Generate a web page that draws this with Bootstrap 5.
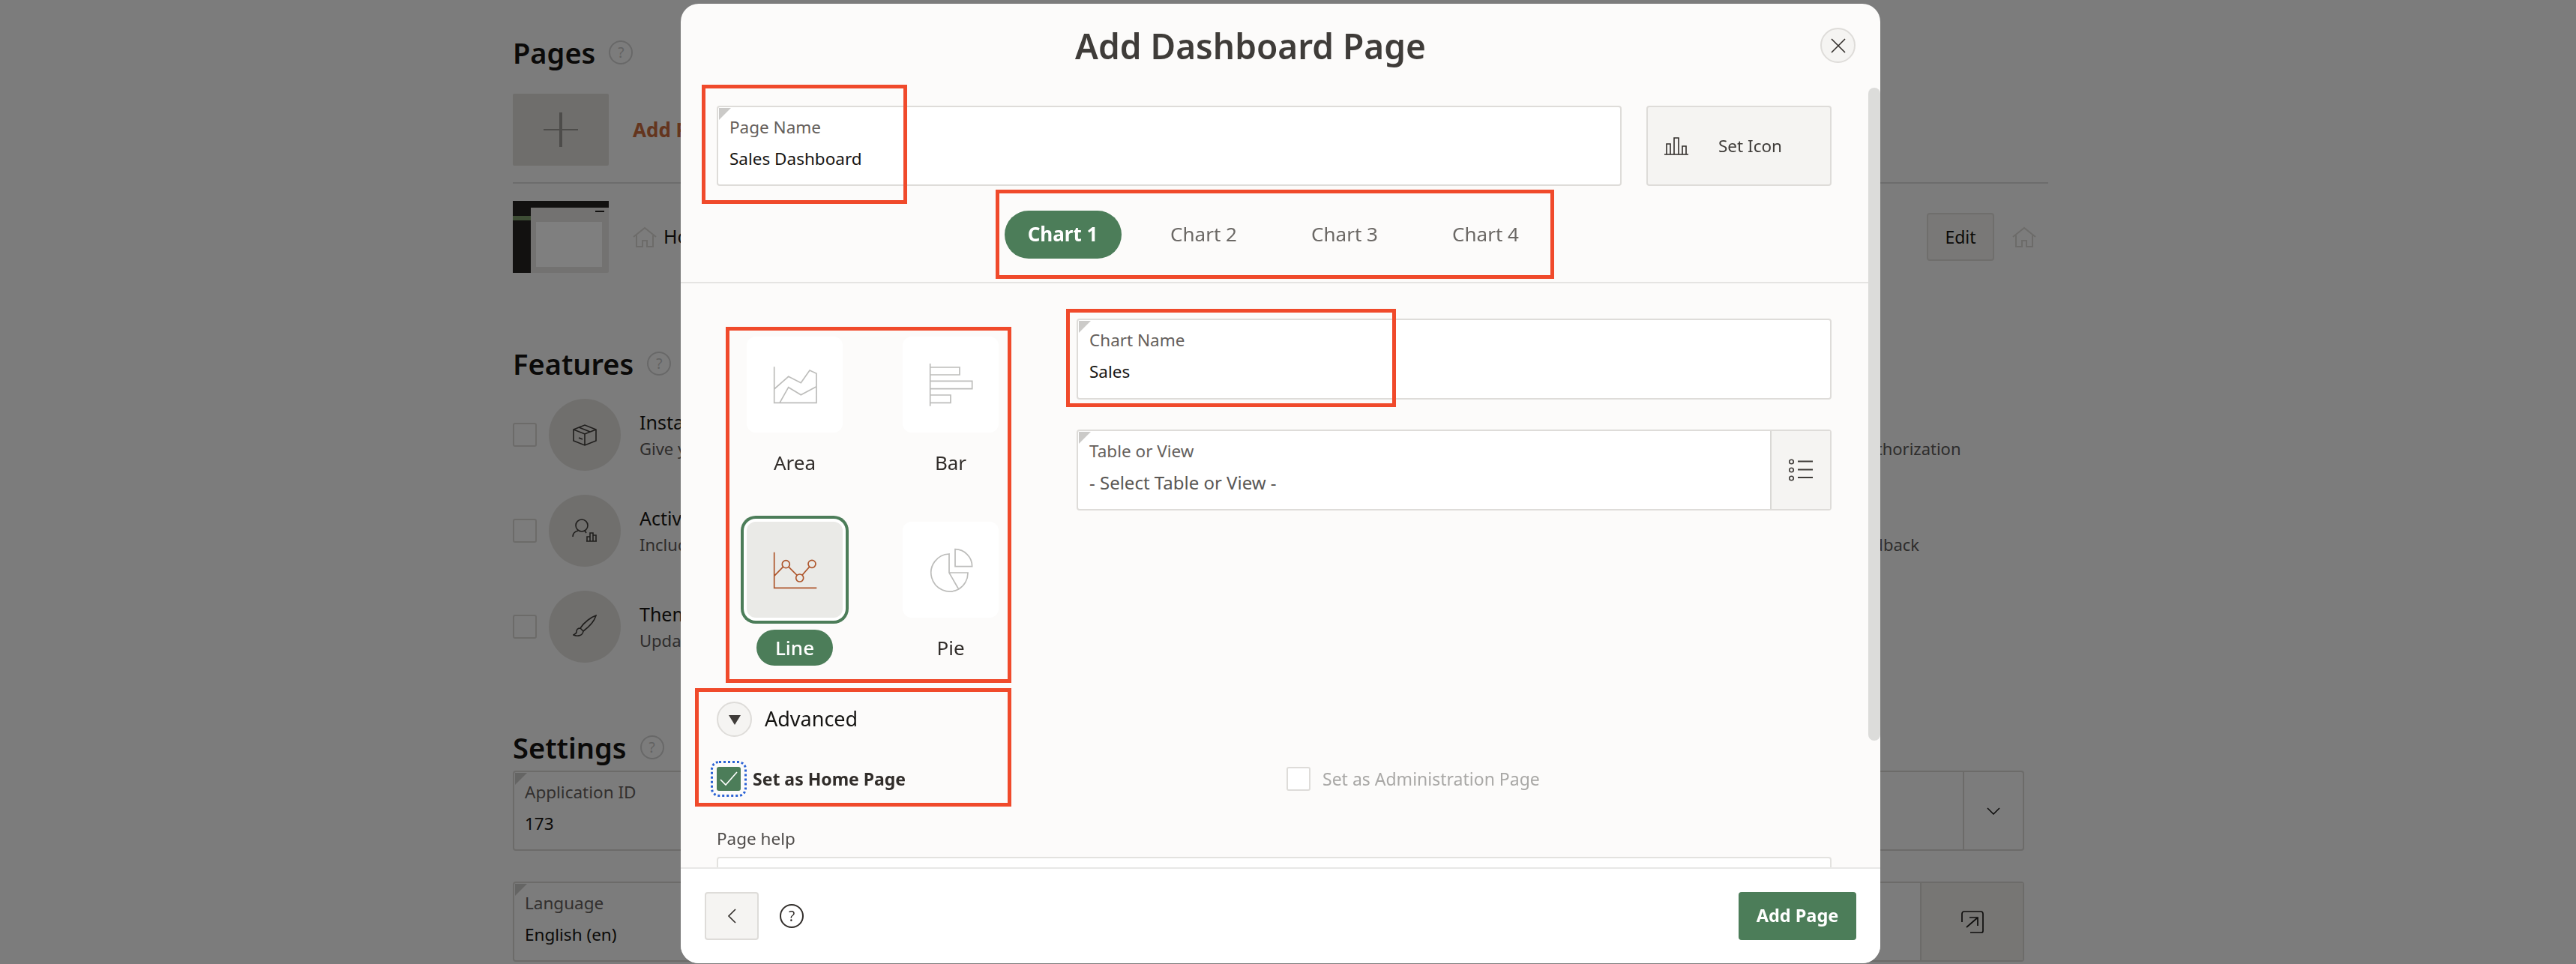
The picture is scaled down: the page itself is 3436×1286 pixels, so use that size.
<!DOCTYPE html>
<html lang="en">

<head>
  <meta charset="UTF-8">
  <meta name="viewport" content="width=device-width, initial-scale=1.0">
  <title>Add Dashboard Page</title>
  <link href="https://cdn.jsdelivr.net/npm/bootstrap@5.3.3/dist/css/bootstrap.min.css" rel="stylesheet">
  <style>
    html, body { height: 100%; overflow: hidden; }
    body { background: #f8f8f8; font-family: "Noto Sans", sans-serif; color: #161513; font-size: 23px; }

    /* page behind the dialog */
    .app-page { margin-left: 684px; width: 2048px; padding-top: 46px; }
    .sec-title { font-size: 38px; font-weight: 600; line-height: 48px; margin: 0; color: #161513; display: flex; align-items: center; gap: 18px; }
    .sec-help { width: 32px; height: 32px; border: 2px solid #d0d0d0; border-radius: 50%; color: #c4c4c4; font-size: 19px; font-weight: 400; line-height: 28px; text-align: center; }
    .page-row { display: flex; align-items: center; width: 2016px; height: 96px; }
    .add-row { margin-top: 31px; }
    .add-tile { width: 128px; height: 96px; background: #dedcd9; display: flex; align-items: center; justify-content: center; border-radius: 2px; }
    .add-link { color: #c86a3c; font-weight: 700; font-size: 26px; margin-left: 32px; }
    .page-rule { border-top: 2px solid #d8d8d8; margin: 22px 0 23px; }
    .home-name { margin-left: 32px; display: flex; align-items: center; gap: 9px; font-size: 25px; }
    .edit-btn { width: 90px; height: 64px; margin-left: auto; margin-right: 24px; background: #f2f0ee; border: 2px solid #dedcd9; border-radius: 4px; font-size: 23px; color: #161513; padding: 0; }
    .home-end { margin-right: -16px; }
    .features-title { margin-top: 97px; }
    .ftr-grid { display: grid; grid-template-columns: 1008px 1008px; row-gap: 32px; width: 2016px; margin-top: 23px; }
    .ftr-item { display: flex; align-items: center; height: 96px; white-space: nowrap; }
    .ftr-box { width: 32px; height: 32px; border: 2px solid #d8d6d3; border-radius: 3px; background: #f8f8f8; flex: none; }
    .ftr-circle { width: 96px; height: 96px; border-radius: 50%; background: #e0dedb; margin-left: 16px; margin-right: 25px; display: flex; align-items: center; justify-content: center; flex: none; }
    .ftr-name { font-size: 25px; line-height: 32px; }
    .ftr-sub { font-size: 22px; line-height: 30px; color: #5c5a58; margin-top: 4px; }
    .ftr-push { margin-left: 394px; }
    .ftr-push2 { margin-left: 548px; }
    .set-title { margin-top: 89px; margin-bottom: 7px; }
    .set-grid { display: grid; grid-template-columns: 984px 1000px; column-gap: 32px; row-gap: 41px; width: 2016px; }

    /* input fields */
    .fld { position: relative; height: 107px; border: 2px solid #dedcd9; border-radius: 4px; background: #fff; padding: 11px 15px 0; display: flex; }
    .fld-bare { background: transparent; border-color: #d8d6d3; padding: 0; }
    .fld::before { content: ""; position: absolute; left: 1px; top: 1px; border-top: 16px solid #cbcac8; border-right: 16px solid transparent; }
    .fld-main { flex: 1; min-width: 0; }
    .fld-bare .fld-main { padding: 11px 14px 0; }
    .fld-label { font-size: 22.5px; line-height: 32px; color: #655f5c; }
    .fld-value { font-size: 22.5px; line-height: 32px; margin-top: 10px; color: #161513; }
    .fld-value.dim-value { font-size: 24px; color: #5a5754; }
    .fld-side { display: flex; align-items: center; justify-content: center; border-left: 2px solid #d8d6d3; width: 80px; }
    .fld-side-wide { width: 137px; background: #eeece9; }

    /* dialog */
    .modal.dlg-wrap { overflow: hidden; }
    .dlg { max-width: none; width: 1600px; margin: 5px 0 0 908px; }
    .dlg .modal-content { height: 1280px; background: #fcfbfa; border: 0; border-radius: 24px; overflow: hidden; color: #161513; }
    .dlg-head { height: 112px; padding: 0; border: 0; display: block; flex: none; }
    .dlg-title { font-size: 46px; font-weight: 600; color: #3f3c39; line-height: 112px; text-align: center; margin: 0; padding-right: 80px; }
    .dlg-close { position: absolute; left: 1520px; top: 32px; width: 47px; height: 47px; border-radius: 50%; border: 2px solid #dedcd9; background: #f5f4f2; padding: 0; display: flex; align-items: center; justify-content: center; }
    .dlg-body { flex: none; height: 1040px; overflow: hidden; padding: 24px 65px 0 48px; position: relative; }
    .dlg-thumb { position: absolute; right: 0; top: 0; width: 16px; height: 871px; background: #dcdcda; border-radius: 8px; }
    .top-line { display: flex; gap: 33px; }
    .top-line .fld { flex: 1; }
    .icon-btn { width: 247px; height: 107px; background: #f5f4f2; border: 2px solid #dedcd9; border-radius: 4px; color: #3f3c39; font-size: 22.5px; display: flex; align-items: center; padding: 0 0 0 22px; gap: 40px; }
    .tab-bar { margin-top: 33px; gap: 32px; height: 64px; }
    .tab-bar .nav-link { width: 156px; height: 64px; padding: 0; font-size: 26px; line-height: 62px; text-align: center; color: #6b6865; border-radius: 32px; }
    .tab-bar .nav-link.active { background: #4c7d59; color: #fff; font-weight: 700; }
    .tab-rule { height: 2px; background: #e5e4e2; margin: 31px -65px 0 -48px; }
    .chart-area { display: flex; gap: 64px; }
    .type-grid { display: grid; grid-template-columns: 208px 208px; row-gap: 55px; padding-top: 71px; flex: none; }
    .type-item { display: flex; flex-direction: column; align-items: center; }
    .type-tile { width: 128px; height: 128px; background: #fff; border-radius: 12px; display: flex; align-items: center; justify-content: center; }
    .type-tile.picked { background: #eaeae7; box-shadow: 0 0 0 4px #fff, 0 0 0 8px #4c7d59; }
    .type-name { margin-top: 16px; height: 48px; line-height: 48px; font-size: 26px; color: #312d2a; padding: 0 16px; border-radius: 24px; }
    .type-name.picked { width: 102px; text-align: center; padding: 0; background: #4c7d59; color: #fff; font-weight: 500; }
    .chart-fields { flex: 1; display: flex; flex-direction: column; gap: 40px; padding-top: 47px; }
    .chart-fields .fld { height: 108px; }
    .fld-split { padding-right: 0; padding-top: 0; padding-left: 0; background: #fff; }
    .fld-split .fld-main { padding: 11px 15px 0; }
    .fld-split .fld-side { background: #f5f4f2; border-left-color: #d9d8d5; }
    .adv-line { display: flex; align-items: center; gap: 17px; margin-top: 48px; height: 47px; font-size: 27px; }
    .adv-btn { width: 47px; height: 47px; border-radius: 50%; border: 2px solid #dedcd9; background: #f5f4f2; padding: 0; display: flex; align-items: center; justify-content: center; }
    .chk-line { display: flex; align-items: center; margin-top: 40px; height: 32px; }
    .chk-left { width: 760px; display: flex; align-items: center; gap: 16px; font-weight: 700; color: #312d2a; font-size: 23px; }
    .chk-right { display: flex; align-items: center; gap: 16px; color: #a9a8a6; font-size: 23px; }
    .chk-on { width: 32px; height: 32px; background: #4c7d59; border-radius: 3px; outline: 3px dotted #2a62d4; outline-offset: 5px; display: flex; flex: none; }
    .chk-off { width: 32px; height: 32px; background: #fff; border: 2px solid #dedcd9; border-radius: 3px; flex: none; }
    .help-label { margin-top: 48px; line-height: 32px; font-size: 22.5px; color: #4f4c4a; }
    .help-area { height: 60px; border: 2px solid #e3e2df; border-radius: 4px; background: #fff; margin-top: 8px; }
    .dlg-foot { height: 128px; flex: none; background: #fff; border-top: 2px solid #e8e8e6; padding: 0 32px; display: flex; align-items: center; justify-content: flex-start; flex-wrap: nowrap; margin: 0; }
    .dlg-foot > * { margin: 0; }
    .back-btn { width: 72px; height: 64px; background: #f5f4f2; border: 2px solid #dedcd9; border-radius: 4px; padding: 0; display: flex; align-items: center; justify-content: center; }
    .foot-help { width: 32px; height: 48px; margin-left: 28px !important; display: flex; align-items: center; justify-content: center; }
    .foot-ring { width: 32px; height: 32px; flex: none; border: 2px solid #312d2a; border-radius: 50%; font-size: 19px; line-height: 28px; text-align: center; color: #312d2a; }
    .add-btn { margin-left: auto !important; width: 157px; height: 64px; background: #4c7d59; border: 0; border-radius: 4px; color: #fff; font-weight: 700; font-size: 23.5px; padding: 0; }

    /* red call-outs drawn over the dialog */
    .callout { position: absolute; border: 5px solid #f04a2b; pointer-events: none; z-index: 5; }
    .call-name { left: 28px; top: 108px; width: 274px; height: 159px; }
    .call-tabs { left: 420px; top: 248px; width: 745px; height: 119px; }
    .call-chart { left: 514px; top: 407px; width: 440px; height: 131px; }
    .call-types { left: 60px; top: 431px; width: 381px; height: 475px; }
    .call-adv { left: 19px; top: 913px; width: 422px; height: 158px; }
  </style>
</head>

<body>
  <div class="app-page">
    <h2 class="sec-title"><span>Pages</span><span class="sec-help">?</span></h2>
    <div class="page-row add-row">
      <div class="add-tile">
        <svg width="48" height="48" viewBox="0 0 48 48"><path d="M24 1v46" stroke="#9a9894" stroke-width="4" fill="none"/><path d="M1 24h46" stroke="#9a9894" stroke-width="2" fill="none"/></svg>
      </div>
      <span class="add-link">Add Page</span>
    </div>
    <div class="page-rule"></div>
    <div class="page-row">
      <svg width="128" height="96" viewBox="0 0 128 96">
        <rect width="128" height="96" rx="2" fill="#e6e5e2"/>
        <rect x="31" y="28" width="88" height="60" fill="#fff"/>
        <rect width="128" height="9" fill="#242220"/>
        <rect y="9" width="24" height="87" fill="#242220"/>
        <rect y="20" width="24" height="6" fill="#7d9a6a"/>
        <rect x="110" y="13" width="12" height="2" fill="#242220"/>
      </svg>
      <span class="home-name">
        <svg width="32" height="28" viewBox="0 0 32 28"><path d="M1 14 16 2l15 12M5 12v15h8v-8h6v8h8V12" stroke="#d8d6d3" stroke-width="2" fill="none"/></svg>
        <span>Home</span>
      </span>
      <button class="edit-btn" type="button">Edit</button>
      <svg class="home-end" width="32" height="28" viewBox="0 0 32 28"><path d="M1 14 16 2l15 12M5 12v15h8v-8h6v8h8V12" stroke="#d8d6d3" stroke-width="2" fill="none"/></svg>
    </div>

    <h2 class="sec-title features-title"><span>Features</span><span class="sec-help">?</span></h2>
    <div class="ftr-grid">
      <div class="ftr-item">
        <span class="ftr-box"></span>
        <span class="ftr-circle">
          <svg width="32" height="30" viewBox="0 0 32 30" fill="none" stroke="#3f3c39" stroke-width="1.6"><path d="M1 8 16 2l15 6v15l-15 6-15-6zM1 8l15 6 15-6M16 14v15M8 5l15 6M8 19l5 2"/></svg>
        </span>
        <div>
          <div class="ftr-name">Install App</div>
          <div class="ftr-sub">Give your users</div>
        </div>
      </div>
      <div class="ftr-item"><div class="ftr-push"><div class="ftr-name">Access Control</div><div class="ftr-sub">Enable role based authentication and authorization</div></div></div>
      <div class="ftr-item">
        <span class="ftr-box"></span>
        <span class="ftr-circle">
          <svg width="34" height="32" viewBox="0 0 34 32" fill="none" stroke="#3f3c39" stroke-width="1.6"><circle cx="13" cy="9" r="8"/><path d="M1 24c0-4 3-7 7-8M17 16l2 3M20 30V24h4v6M24 30V19h4v11M28 30v-8h4v8M19 30h14"/></svg>
        </span>
        <div>
          <div class="ftr-name">Activity Log</div>
          <div class="ftr-sub">Include reports</div>
        </div>
      </div>
      <div class="ftr-item"><div class="ftr-push2"><div class="ftr-name">Feedback</div><div class="ftr-sub">Provide a way to post feedback</div></div></div>
      <div class="ftr-item">
        <span class="ftr-box"></span>
        <span class="ftr-circle">
          <svg width="32" height="32" viewBox="0 0 32 32" fill="none" stroke="#3f3c39" stroke-width="1.6"><path d="M31 1C25 3 15 10 10 18l4 4C22 16 29 8 31 1zM10 18c-4 0-5 3-5 5 0 2-2 3-4 4 4 2 12 2 13-5"/></svg>
        </span>
        <div>
          <div class="ftr-name">Theme Style</div>
          <div class="ftr-sub">Update the look</div>
        </div>
      </div>
    </div>

    <h2 class="sec-title set-title"><span>Settings</span><span class="sec-help">?</span></h2>
    <div class="set-grid">
      <div class="fld fld-bare"><div class="fld-main"><div class="fld-label">Application ID</div><div class="fld-value">173</div></div></div>
      <div class="fld fld-bare"><div class="fld-main"></div>
        <div class="fld-side">
          <svg width="18" height="10" viewBox="0 0 18 10"><path d="M1 1l8 8 8-8" stroke="#161513" stroke-width="1.5" fill="none"/></svg>
        </div>
      </div>
      <div class="fld fld-bare"><div class="fld-main"><div class="fld-label">Language</div><div class="fld-value">English (en)</div></div></div>
      <div class="fld fld-bare"><div class="fld-main"></div>
        <div class="fld-side fld-side-wide">
          <svg width="30" height="30" viewBox="0 0 30 30" fill="none" stroke="#1c1b19" stroke-width="1.7"><path d="M1 15V4a3 3 0 0 1 3-3h22a3 3 0 0 1 3 3v23a2 2 0 0 1-2 2H12M7 22 22 9M11 9h11v11"/></svg>
        </div>
      </div>
    </div>
  </div>

  <div class="modal-backdrop show"></div>

  <div class="modal d-block dlg-wrap" tabindex="-1">
    <div class="modal-dialog dlg">
      <div class="modal-content">
        <div class="modal-header dlg-head">
          <h1 class="dlg-title">Add Dashboard Page</h1>
          <button class="dlg-close" type="button" aria-label="Close">
            <svg width="22" height="22" viewBox="0 0 22 22"><path d="M2 2l18 18M20 2 2 20" stroke="#312d2a" stroke-width="1.6" fill="none"/></svg>
          </button>
        </div>

        <div class="modal-body dlg-body">
          <div class="dlg-thumb"></div>
          <div class="top-line">
            <div class="fld">
              <div class="fld-main">
                <div class="fld-label">Page Name</div>
                <div class="fld-value">Sales Dashboard</div>
              </div>
            </div>
            <button class="icon-btn" type="button">
              <svg width="32" height="24" viewBox="0 0 32 24" fill="none" stroke="#312d2a" stroke-width="1.6"><path d="M0 23h32M3 23V9h5v14M13 23V1h6v22M24 23V12h5v11"/></svg>
              Set Icon
            </button>
          </div>

          <ul class="nav nav-pills justify-content-center tab-bar">
            <li class="nav-item"><a class="nav-link active" href="#">Chart 1</a></li>
            <li class="nav-item"><a class="nav-link" href="#">Chart 2</a></li>
            <li class="nav-item"><a class="nav-link" href="#">Chart 3</a></li>
            <li class="nav-item"><a class="nav-link" href="#">Chart 4</a></li>
          </ul>
          <div class="tab-rule"></div>

          <div class="chart-area">
            <div class="type-grid">
              <div class="type-item">
                <div class="type-tile">
                  <svg width="64" height="64" viewBox="0 0 64 64" fill="none" stroke="#bdbdbb" stroke-width="1.7"><path d="M4.7 8.3v48H61V17.3L52 13 40.3 29.7l-16.6-8.4L4.7 38M12 56.3l11.7-20.6 16.6 10L61 34.7"/></svg>
                </div>
                <div class="type-name">Area</div>
              </div>
              <div class="type-item">
                <div class="type-tile">
                  <svg width="64" height="64" viewBox="0 0 64 64" fill="none" stroke="#bdbdbb" stroke-width="1.7"><path d="M4.7 4v56.7M4.7 9H44v10H4.7M4.7 27.3h56v10.4h-56M4.7 46H32v10.3H4.7"/></svg>
                </div>
                <div class="type-name">Bar</div>
              </div>
              <div class="type-item">
                <div class="type-tile picked">
                  <svg width="64" height="64" viewBox="0 0 64 64" fill="none" stroke="#ae562c" stroke-width="1.7"><path d="M4.7 8.7v47.6h56.6M4.7 40.3l12.4-12.6M23.8 28.2l11.4 11.3M42 39.2l9.6-11"/><circle cx="20.3" cy="24.7" r="5"/><circle cx="38.7" cy="43" r="5"/><circle cx="55" cy="24.3" r="5"/></svg>
                </div>
                <div class="type-name picked">Line</div>
              </div>
              <div class="type-item">
                <div class="type-tile">
                  <svg width="64" height="64" viewBox="0 0 64 64" fill="none" stroke="#bdbdbb" stroke-width="1.7"><path d="M38 4.7v23h22.7A23 23 0 0 0 38 4.7zM30 11v25l12.7 22A25 25 0 1 1 30 11zM30 36h25a25 25 0 0 1-12.3 22"/></svg>
                </div>
                <div class="type-name">Pie</div>
              </div>
            </div>

            <div class="chart-fields">
              <div class="fld">
                <div class="fld-main">
                  <div class="fld-label">Chart Name</div>
                  <div class="fld-value">Sales</div>
                </div>
              </div>
              <div class="fld fld-split">
                <div class="fld-main">
                  <div class="fld-label">Table or View</div>
                  <div class="fld-value dim-value">- Select Table or View -</div>
                </div>
                <div class="fld-side">
                  <svg width="32" height="30" viewBox="0 0 32 30" fill="none" stroke="#3f3c39"><circle cx="3.5" cy="4" r="2.8" stroke-width="1.6"/><circle cx="3.5" cy="15" r="2.8" stroke-width="1.6"/><circle cx="3.5" cy="26" r="2.8" stroke-width="1.6"/><path d="M12 3.5h20M12 14.5h20M12 25h20" stroke-width="2"/></svg>
                </div>
              </div>
            </div>
          </div>

          <div class="adv-line">
            <button class="adv-btn" type="button" aria-label="Advanced">
              <svg width="18" height="14" viewBox="0 0 18 14"><path d="M1 1h16L9 14z" fill="#3f3c39"/></svg>
            </button>
            <span>Advanced</span>
          </div>

          <div class="chk-line">
            <div class="chk-left">
              <span class="chk-on">
                <svg width="32" height="32" viewBox="0 0 32 32"><path d="M5 17l7 7L27 7" stroke="#fff" stroke-width="1.6" fill="none"/></svg>
              </span>
              <span>Set as Home Page</span>
            </div>
            <div class="chk-right"><span class="chk-off"></span><span>Set as Administration Page</span></div>
          </div>

          <div class="help-label">Page help</div>
          <div class="help-area"></div>
        </div>

        <div class="modal-footer dlg-foot">
          <button class="back-btn" type="button" aria-label="Back">
            <svg width="12" height="20" viewBox="0 0 12 20"><path d="M11 1 2 10l9 9" stroke="#312d2a" stroke-width="1.6" fill="none"/></svg>
          </button>
          <div class="foot-help"><span class="foot-ring">?</span></div>
          <button class="add-btn" type="button">Add Page</button>
        </div>

        <div class="callout call-name"></div>
        <div class="callout call-tabs"></div>
        <div class="callout call-chart"></div>
        <div class="callout call-types"></div>
        <div class="callout call-adv"></div>
      </div>
    </div>
  </div>

  <script src="https://cdn.jsdelivr.net/npm/bootstrap@5.3.3/dist/js/bootstrap.bundle.min.js"></script>
</body>

</html>
